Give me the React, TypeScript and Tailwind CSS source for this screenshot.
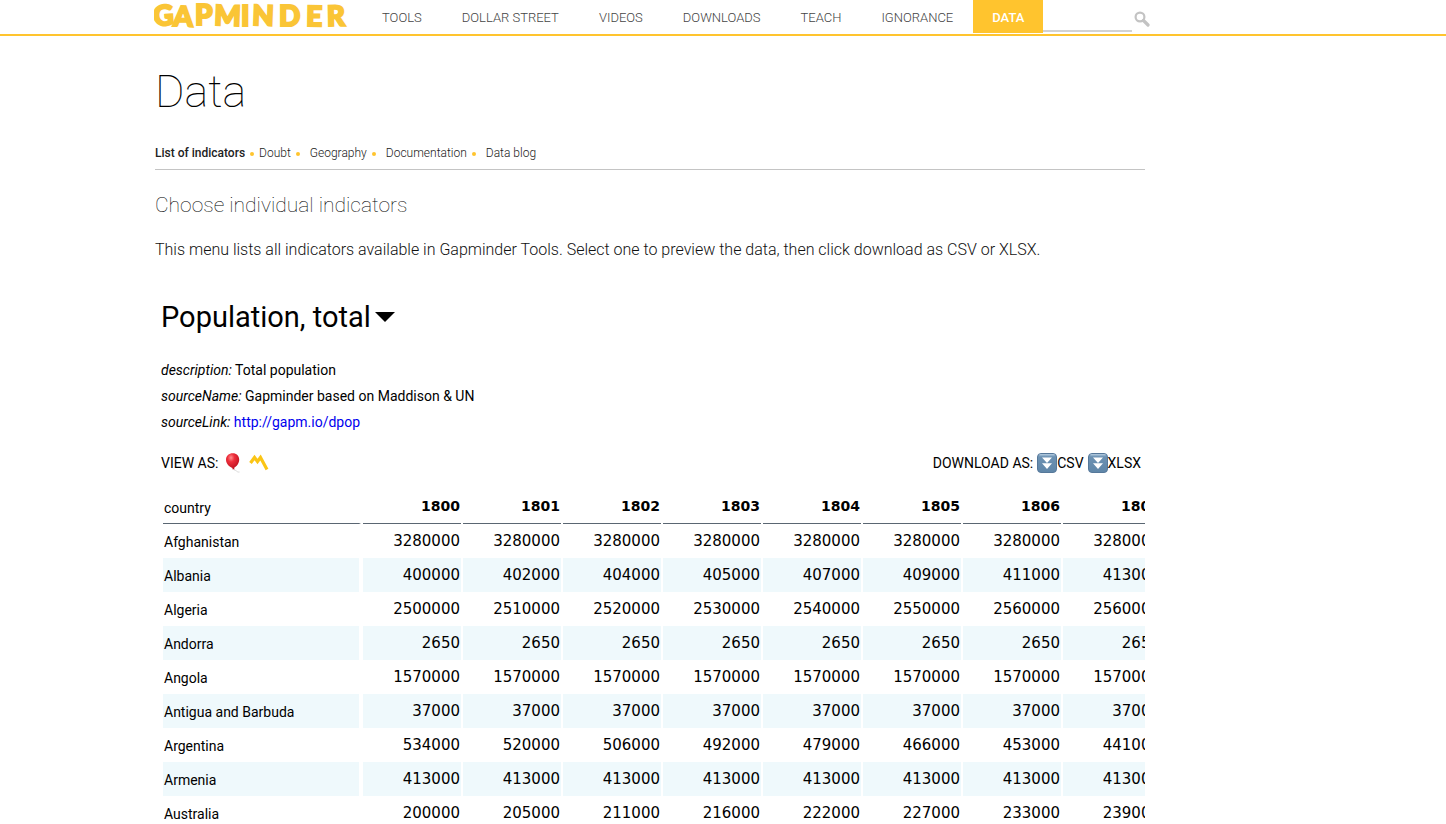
import React from 'react';

const navItems = ['TOOLS', 'DOLLAR STREET', 'VIDEOS', 'DOWNLOADS', 'TEACH', 'IGNORANCE'];
const sections = ['List of indicators', 'Doubt', 'Geography', 'Documentation', 'Data blog'];
const years = [1800, 1801, 1802, 1803, 1804, 1805, 1806, 1807];
const rows: [string, number[]][] = [
  ['Afghanistan', [3280000, 3280000, 3280000, 3280000, 3280000, 3280000, 3280000, 3280000]],
  ['Albania', [400000, 402000, 404000, 405000, 407000, 409000, 411000, 413000]],
  ['Algeria', [2500000, 2510000, 2520000, 2530000, 2540000, 2550000, 2560000, 2560000]],
  ['Andorra', [2650, 2650, 2650, 2650, 2650, 2650, 2650, 2650]],
  ['Angola', [1570000, 1570000, 1570000, 1570000, 1570000, 1570000, 1570000, 1570000]],
  ['Antigua and Barbuda', [37000, 37000, 37000, 37000, 37000, 37000, 37000, 37000]],
  ['Argentina', [534000, 520000, 506000, 492000, 479000, 466000, 453000, 441000]],
  ['Armenia', [413000, 413000, 413000, 413000, 413000, 413000, 413000, 413000]],
  ['Australia', [200000, 205000, 211000, 216000, 222000, 227000, 233000, 239000]],
];

function Logo() {
  return (
    <svg width="197" height="30" viewBox="0 0 197 30" role="img" aria-label="Gapminder">
      <text
        x="0 19 41 60 87 98 125 152 173"
        y="26 26 25 25 26 25 26 26 26"
        rotate="-4 2 0 2 0 2 0 1 -1"
        fontFamily="Lato, sans-serif"
        fontWeight="900"
        fontSize="28"
        fill="#fac536"
        stroke="#fac536"
        strokeWidth="2"
      >
        GAPMINDER
      </text>
    </svg>
  );
}

function SearchIcon() {
  return (
    <svg width="16" height="16" viewBox="0 0 16 16" fill="none" stroke="#c3c3c3">
      <circle cx="6" cy="6" r="4.4" strokeWidth="2.2" />
      <path d="M9.5 9.5 14 14" strokeWidth="3.2" strokeLinecap="round" />
    </svg>
  );
}

function Balloon() {
  return (
    <svg width="20" height="20" viewBox="0 0 20 20">
      <defs>
        <radialGradient id="balloon" cx="0.38" cy="0.28" r="0.75">
          <stop offset="0" stopColor="#ff8f8f" />
          <stop offset="0.35" stopColor="#ee2f3c" />
          <stop offset="1" stopColor="#b90f1d" />
        </radialGradient>
      </defs>
      <path d="M8.500 15.500c.5 2 2 1.600 3 2.500s1.500 1.200 3 1" fill="none" stroke="#cfcfcf" strokeWidth="0.800" />
      <path d="M7.800 0.300C11.500.3 14.200 3 14.200 6.600c0 3.900-2.700 7.200-5.200 8.300l.7 1.300H7.300l.3-1.300C4.300 13.900 1 10.600 1 6.700 1 3 4 .3 7.800.3Z" fill="url(#balloon)" />
    </svg>
  );
}

function Alternation() {
  return (
    <svg width="20" height="20" viewBox="0 0 20 20" fill="none" stroke="#fbc515" strokeWidth="3.200" strokeLinejoin="miter">
      <path d="M1.500 10 5.500 4.500 8.500 8.500 11.500 4.500 18 16.500" />
    </svg>
  );
}

function FastDown() {
  return (
    <svg width="20" height="20" viewBox="0 0 20 20">
      <defs>
        <linearGradient id="key" x1="0" y1="0" x2="0" y2="1">
          <stop offset="0" stopColor="#8fb0cd" />
          <stop offset="0.2" stopColor="#6c91b2" />
          <stop offset="1" stopColor="#5f86a8" />
        </linearGradient>
      </defs>
      <rect x="0.500" y="0.500" width="19" height="19" rx="3.500" fill="url(#key)" stroke="#56789a" />
      <path d="M2.500 1.800h15" stroke="#b9cfe2" />
      <path d="M5 4.500h10L10 10ZM5 10.300h10L10 16Z" fill="#fff" />
    </svg>
  );
}

export default function App() {
  return (
    <div className="bg-white font-[Roboto,sans-serif] text-black">
      <header className="flex h-9 items-start border-b-2 border-[#ffc42e] pl-[154px]">
        <a href="#home" className="mr-[11px] block shrink-0">
          <Logo />
        </a>
        <nav className="flex text-[13px] leading-[33px] font-light whitespace-nowrap text-[#444]">
          {navItems.map((item) => (
            <a key={item} href={'#' + item.toLowerCase().replace(' ', '-')} className="px-5 pt-px">
              {item}
            </a>
          ))}
          <a href="#data" className="h-[33px] bg-[#ffc42e] px-[19px] pt-px font-medium text-white">
            DATA
          </a>
        </nav>
        <form className="flex items-start">
          <input type="search" aria-label="Search" className="h-8 w-[89px] border-b-2 border-[#d2d2d2] outline-none" />
          <button type="button" aria-label="Search" className="mt-[11px] ml-[2px]">
            <SearchIcon />
          </button>
        </form>
      </header>

      <main className="ml-[155px] max-w-[990px]">
        <h1 className="pt-7 text-[45px] leading-[56px] font-thin">Data</h1>

        <nav className="mt-5 flex h-[30px] items-center border-b border-[#c4c4c4] pb-1 text-xs font-light whitespace-nowrap text-[#222]">
          {sections.map((section, i) => (
            <React.Fragment key={section}>
              {i > 0 && <span className={i > 1 ? 'mt-[3px] mr-[10px] ml-[5px] size-1 rounded-full bg-[#ffc42e]' : 'mx-[5px] mt-[3px] size-1 rounded-full bg-[#ffc42e]'} />}
              <a href={'#section-' + i} className={i === 0 ? 'font-medium' : ''}>
                {section}
              </a>
            </React.Fragment>
          ))}
        </nav>

        <h2 className="mt-5 text-[21px] leading-[30px] font-thin">Choose individual indicators</h2>
        <p className="mt-[18px] text-base leading-6 font-light text-[#111]">
          This menu lists all indicators available in Gapminder Tools. Select one to preview the data, then click
          download as CSV or XLSX.
        </p>

        <button type="button" className="mt-[34px] ml-[6px] flex items-center gap-1 text-[29px] leading-[42px]">
          Population, total
          <svg width="20" height="10" viewBox="0 0 20 10">
            <path d="M0 0h20L10 10Z" />
          </svg>
        </button>

        <div className="mt-[19px] ml-[6px] text-sm leading-[26px]">
          <p><em>description:</em> Total population</p>
          <p><em>sourceName:</em> Gapminder based on Maddison &amp; UN</p>
          <p><em>sourceLink:</em> <a href="http://gapm.io/dpop" className="text-[#0000ee]">http://gapm.io/dpop</a></p>
        </div>

        <div className="mt-[18px] flex h-5 items-center justify-between pr-1 pl-[6px] text-sm">
          <div className="flex items-center">
            <span className="mr-[7px]">VIEW AS:</span>
            <button type="button" aria-label="Bubbles" className="mr-1"><Balloon /></button>
            <button type="button" aria-label="Lines"><Alternation /></button>
          </div>
          <div className="flex items-center">
            <span className="mr-1">DOWNLOAD AS:</span>
            <a href="#csv" className="mr-1 flex items-center"><FastDown />CSV</a>
            <a href="#xlsx" className="flex items-center"><FastDown />XLSX</a>
          </div>
        </div>

        <div className="mt-[17px] ml-[6px] overflow-x-auto">
          <table className="w-max table-fixed border-separate border-spacing-x-[2px] border-spacing-y-0 text-sm">
            <thead>
              <tr className="h-[34px]">
                <th scope="col" className="w-[198px] border-r-2 border-b border-r-white border-b-[#5a6672] px-px pt-[2px] text-left font-normal">
                  country
                </th>
                {years.map((year) => (
                  <th key={year} scope="col" className="w-[98px] border-b border-[#5a6672] px-px pb-px text-right font-['DejaVu_Sans'] font-bold">
                    {year}
                  </th>
                ))}
              </tr>
            </thead>
            <tbody>
              {rows.map(([country, values]) => (
                <tr key={country} className="group h-[34px]">
                  <th scope="row" className="border-r-2 border-white px-px pt-[2px] text-left font-normal group-even:bg-[#eff9fc]">
                    {country}
                  </th>
                  {values.map((value, i) => (
                    <td key={years[i]} className="px-px pt-[2px] text-right font-['DejaVu_Sans'] text-[15px] group-even:bg-[#eff9fc]">
                      {value}
                    </td>
                  ))}
                </tr>
              ))}
            </tbody>
          </table>
        </div>
      </main>
    </div>
  );
}
